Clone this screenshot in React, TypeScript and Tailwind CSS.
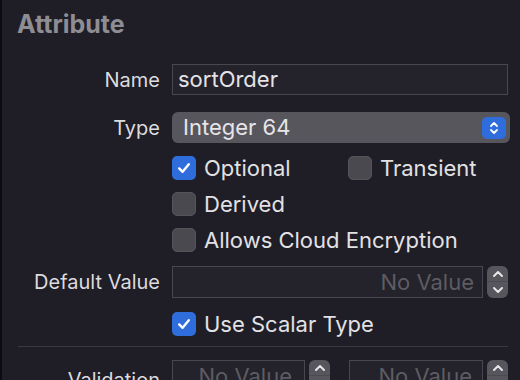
import React from "react";

const font = { fontFamily: "Inter, 'Noto Sans', sans-serif" };

function Check({ checked }: { checked: boolean }) {
  if (checked) {
    return (
      <div className="w-[24px] h-[24px] rounded-[5px] bg-[#2f6ddc] flex items-center justify-center shrink-0">
        <svg width="16" height="16" viewBox="0 0 16 16">
          <path d="M3.2 8.4 L6.6 11.8 L12.8 4.2" fill="none" stroke="#ffffff" strokeWidth="2.4" strokeLinecap="round" strokeLinejoin="round" />
        </svg>
      </div>
    );
  }
  return <div className="w-[24px] h-[24px] rounded-[5px] bg-[#4a494f] border border-[#55545a] shrink-0" />;
}

function CheckRow({ checked, label }: { checked: boolean; label: string }) {
  return (
    <div className="flex items-center gap-[8px] h-[24px]">
      <Check checked={checked} />
      <span className="text-[22px] text-[#e2e1e4] leading-none">{label}</span>
    </div>
  );
}

function Stepper({ onlyUp }: { onlyUp?: boolean }) {
  return (
    <div className="w-[21px] h-[32px] rounded-[6px] bg-[#57565c] flex flex-col items-center shrink-0">
      <div className="h-[16px] w-full flex items-center justify-center border-b border-[#4b4a50]">
        <svg width="12" height="8" viewBox="0 0 12 8">
          <path d="M2 6 L6 2 L10 6" fill="none" stroke="#e6e6e8" strokeWidth="2" strokeLinecap="round" strokeLinejoin="round" />
        </svg>
      </div>
      {!onlyUp && (
        <div className="h-[16px] w-full flex items-center justify-center">
          <svg width="12" height="8" viewBox="0 0 12 8">
            <path d="M2 2 L6 6 L10 2" fill="none" stroke="#e6e6e8" strokeWidth="2" strokeLinecap="round" strokeLinejoin="round" />
          </svg>
        </div>
      )}
    </div>
  );
}

function Label({ children }: { children: React.ReactNode }) {
  return (
    <div className="w-[142px] shrink-0 text-right text-[20px] text-[#dcdbde] leading-none">{children}</div>
  );
}

export default function App() {
  return (
    <div className="w-[520px] h-[380px] overflow-hidden bg-[#1f1d26] flex" style={font}>
      <div className="w-[2px] bg-[#0c0b0f] shrink-0" />
      <div className="flex-1 flex flex-col">
        <div className="h-[2px] bg-[#36353b]" />
        <div className="pl-[15px] pt-[9px] h-[30px] text-[25px] font-bold text-[#8e8d93] leading-[30px]">Attribute</div>
        <div className="pl-[16px] pr-[12px] flex flex-col">
          <div className="flex items-center gap-[12px] mt-[34px]">
            <Label>Name</Label>
            <div className="flex-1 h-[31px] bg-[#24222b] border border-[#48474d] flex items-center pl-[5px] text-[22px] text-[#e4e3e6]">
              sortOrder
            </div>
          </div>
          <div className="flex items-center gap-[12px] mt-[17px]">
            <Label>Type</Label>
            <div className="flex-1 h-[31px] rounded-[6px] bg-[#58565d] flex items-center justify-between pl-[11px] pr-[4px] -mr-[2px] text-[22px] text-[#e6e5e8]">
              <span>Integer 64</span>
              <div className="w-[24px] h-[22px] rounded-[5px] bg-[#2f6ddc] flex items-center justify-center">
                <svg width="12" height="16" viewBox="0 0 12 16">
                  <path d="M3 6 L6 3 L9 6 M3 10 L6 13 L9 10" fill="none" stroke="#ffffff" strokeWidth="1.8" strokeLinecap="round" strokeLinejoin="round" />
                </svg>
              </div>
            </div>
          </div>
          <div className="flex mt-[13px] ml-[154px]">
            <div className="w-[176px]">
              <CheckRow checked label="Optional" />
            </div>
            <CheckRow checked={false} label="Transient" />
          </div>
          <div className="mt-[12px] ml-[154px]">
            <CheckRow checked={false} label="Derived" />
          </div>
          <div className="mt-[12px] ml-[154px]">
            <CheckRow checked={false} label="Allows Cloud Encryption" />
          </div>
          <div className="flex items-center gap-[12px] mt-[14px]">
            <Label>Default Value</Label>
            <div className="flex-1 flex items-center gap-[4px]">
              <div className="flex-1 h-[32px] bg-[#24222b] border border-[#48474d] flex items-center justify-end pr-[8px] text-[22px] text-[#5d5c62]">
                No Value
              </div>
              <Stepper />
            </div>
          </div>
          <div className="mt-[14px] ml-[154px]">
            <CheckRow checked label="Use Scalar Type" />
          </div>
          <div className="mt-[10px] h-[1px] bg-[#3a3940]" />
          <div className="flex items-start gap-[12px] mt-[13px]">
            <div className="w-[142px] shrink-0 text-right text-[20px] text-[#dcdbde] leading-none pt-[10px]">Validation</div>
            <div className="flex-1 flex items-start">
              <div className="w-[133px] h-[32px] bg-[#24222b] border border-[#48474d] flex items-center justify-end pr-[12px] text-[22px] text-[#5d5c62]">
                No Value
              </div>
              <div className="ml-[4px]"><Stepper /></div>
              <div className="ml-[19px] w-[134px] h-[32px] bg-[#24222b] border border-[#48474d] flex items-center justify-end pr-[10px] text-[22px] text-[#5d5c62]">
                No Value
              </div>
              <div className="ml-[4px]"><Stepper /></div>
            </div>
          </div>
        </div>
      </div>
    </div>
  );
}
